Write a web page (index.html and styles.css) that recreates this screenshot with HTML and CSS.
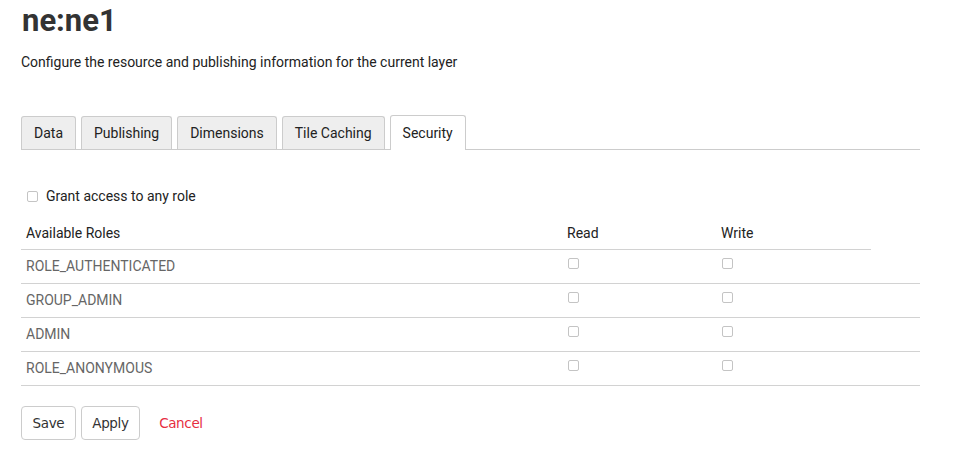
FILE: index.html
```html
<!DOCTYPE html>
<html>
<head>
<meta charset="utf-8">
<link rel="stylesheet" href="styles.css">
</head>
<body>
<div class="page">
  <h1 class="title">ne:ne1</h1>
  <p class="subtitle">Configure the resource and publishing information for the current layer</p>

  <ul class="tabs">
    <li class="tab">Data</li>
    <li class="tab">Publishing</li>
    <li class="tab">Dimensions</li>
    <li class="tab">Tile Caching</li>
    <li class="tab active">Security</li>
  </ul>

  <label class="grant">
    <input type="checkbox" class="cb">
    <span>Grant access to any role</span>
  </label>

  <div class="roles">
    <div class="row head">
      <div class="cell">Available Roles</div>
      <div class="cell">Read</div>
      <div class="cell">Write</div>
    </div>
    <div class="row">
      <div class="cell name">ROLE_AUTHENTICATED</div>
      <div class="cell"><input type="checkbox" class="cb"></div>
      <div class="cell"><input type="checkbox" class="cb"></div>
    </div>
    <div class="row">
      <div class="cell name">GROUP_ADMIN</div>
      <div class="cell"><input type="checkbox" class="cb"></div>
      <div class="cell"><input type="checkbox" class="cb"></div>
    </div>
    <div class="row">
      <div class="cell name">ADMIN</div>
      <div class="cell"><input type="checkbox" class="cb"></div>
      <div class="cell"><input type="checkbox" class="cb"></div>
    </div>
    <div class="row">
      <div class="cell name">ROLE_ANONYMOUS</div>
      <div class="cell"><input type="checkbox" class="cb"></div>
      <div class="cell"><input type="checkbox" class="cb"></div>
    </div>
  </div>

  <div class="actions">
    <button class="btn">Save</button>
    <button class="btn">Apply</button>
    <a class="cancel" href="#">Cancel</a>
  </div>
</div>
</body>
</html>
```

FILE: styles.css
```css
html, body {
  margin: 0;
  padding: 0;
  background: #fff;
}
body {
  font-family: Roboto, "Liberation Sans", sans-serif;
  color: #222;
}
.page {
  width: 899px;
  padding-left: 21px;
}
.title {
  margin: 4px 0 0 1px;
  font-size: 31px;
  line-height: 34px;
  font-weight: 700;
  color: #333;
}
.subtitle {
  margin: 16px 0 0;
  font-size: 14px;
  line-height: 16px;
  color: #222;
}
.tabs {
  list-style: none;
  margin: 45px 0 0;
  padding: 0;
  display: flex;
  align-items: flex-end;
  gap: 5px;
  height: 34px;
  border-bottom: 1px solid #ccc;
}
.tab {
  height: 32px;
  line-height: 32px;
  padding: 0 12px;
  font-size: 14px;
  color: #222;
  background: #eee;
  border: 1px solid #ccc;
  border-bottom: none;
  border-radius: 3px 3px 0 0;
}
.tab.active {
  height: 34px;
  line-height: 34px;
  margin-bottom: -1px;
  background: #fff;
}
.cb {
  -webkit-appearance: none;
  appearance: none;
  width: 11px;
  height: 11px;
  margin: 0;
  border: 1px solid #c4c4c4;
  border-radius: 2px;
  background: #fff;
  box-sizing: border-box;
}
.grant {
  display: flex;
  align-items: center;
  gap: 8px;
  margin-top: 36px;
  padding-left: 6px;
  height: 20px;
  font-size: 14px;
  line-height: 20px;
  color: #222;
}
.roles {
  margin-top: 10px;
}
.row {
  display: grid;
  grid-template-columns: 541px 154px 1fr;
  height: 33px;
  border-bottom: 1px solid #d2d2d2;
}
.row.head {
  width: 850px;
}
.cell {
  padding-left: 5px;
  font-size: 14px;
  line-height: 33px;
  color: #666;
}
.head .cell {
  font-size: 14px;
  line-height: 34px;
  color: #222;
}
.row .cell .cb {
  display: block;
  margin: 8px 0 0 1px;
}
.actions {
  display: flex;
  align-items: center;
  margin-top: 20px;
}
.btn {
  height: 34px;
  padding: 0 10.5px;
  margin-right: 5px;
  font-family: "DejaVu Sans", Verdana, sans-serif;
  font-size: 13.5px;
  letter-spacing: -0.35px;
  color: #333;
  background: #fff;
  border: 1px solid #ccc;
  border-radius: 4px;
}
.cancel {
  margin-left: 14px;
  font-family: "DejaVu Sans", Verdana, sans-serif;
  font-size: 13.5px;
  letter-spacing: -0.35px;
  color: #e62e3f;
  text-decoration: none;
}
```
